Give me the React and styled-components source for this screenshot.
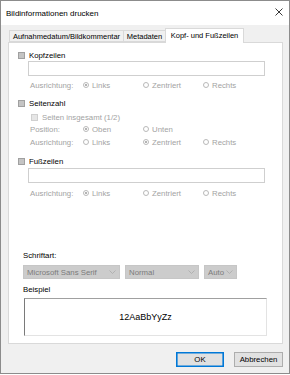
import React from "react";
import styled, { createGlobalStyle } from "styled-components";

const GlobalStyle = createGlobalStyle`
  html, body {
    margin: 0;
    padding: 0;
    background: #ffffff;
  }
  body {
    font-family: "Liberation Sans", Arial, sans-serif;
    font-size: 7.8px;
    color: #000;
  }
`;

const tabs = [
  { label: "Aufnahmedatum/Bildkommentar", width: 115 },
  { label: "Metadaten", width: 43 },
  { label: "Kopf- und Fußzeilen", width: 79, active: true },
];

const Radio = ({ checked, children }) => (
  <RadioItem>
    <RadioDot $checked={checked} />
    <span>{children}</span>
  </RadioItem>
);

const Check = ({ children, sub }) => (
  <CheckRow $sub={sub}>
    <CheckBox $sub={sub} />
    <span>{children}</span>
  </CheckRow>
);

const Chevron = () => (
  <svg width="7" height="4" viewBox="0 0 7 4">
    <polyline points="0.5,0.5 3.5,3.5 6.5,0.5" fill="none" stroke="#a9a9a9" strokeWidth="0.8" />
  </svg>
);

const App = () => (
  <>
    <GlobalStyle />
    <Window>
      <TitleBar>
        <Title>Bildinformationen drucken</Title>
        <svg width="8" height="8" viewBox="0 0 8 8">
          <path d="M0.5 0.5 L7.5 7.5 M7.5 0.5 L0.5 7.5" stroke="#222" strokeWidth="0.9" />
        </svg>
      </TitleBar>
      <Body>
        <TabStrip>
          {tabs.map((t) => (
            <Tab key={t.label} $active={t.active} $width={t.width}>
              {t.label}
            </Tab>
          ))}
        </TabStrip>
        <Panel>
          <Check>Kopfzeilen</Check>
          <TextBox $top={1} />
          <OptionRow $top={4}>
            <span>Ausrichtung:</span>
            <Radio checked>Links</Radio>
            <Radio>Zentriert</Radio>
            <Radio>Rechts</Radio>
          </OptionRow>

          <Section $top={8}>
            <Check>Seitenzahl</Check>
          </Section>
          <Section $top={4}>
            <Check sub>Seiten insgesamt (1/2)</Check>
          </Section>
          <OptionRow $top={2}>
            <span>Position:</span>
            <Radio checked>Oben</Radio>
            <Radio>Unten</Radio>
          </OptionRow>
          <OptionRow $top={3}>
            <span>Ausrichtung:</span>
            <Radio>Links</Radio>
            <Radio checked>Zentriert</Radio>
            <Radio>Rechts</Radio>
          </OptionRow>

          <Section $top={9}>
            <Check>Fußzeilen</Check>
          </Section>
          <TextBox $top={2} />
          <OptionRow $top={5}>
            <span>Ausrichtung:</span>
            <Radio checked>Links</Radio>
            <Radio>Zentriert</Radio>
            <Radio>Rechts</Radio>
          </OptionRow>

          <Label $top={53}>Schriftart:</Label>
          <SelectRow>
            <Select $width={97}>
              <span>Microsoft Sans Serif</span>
              <Chevron />
            </Select>
            <Select $width={74}>
              <span>Normal</span>
              <Chevron />
            </Select>
            <Select $width={33}>
              <span>Auto</span>
              <Chevron />
            </Select>
          </SelectRow>
          <Label $top={6}>Beispiel</Label>
          <Preview>12AaBbYyZz</Preview>
        </Panel>
        <Buttons>
          <Button $default>OK</Button>
          <Button>Abbrechen</Button>
        </Buttons>
      </Body>
    </Window>
  </>
);

const Window = styled.div`
  box-sizing: border-box;
  width: 290px;
  height: 374px;
  border: 1px solid #8c8c8c;
  display: flex;
  flex-direction: column;
  background: #f0f0f0;
`;

const TitleBar = styled.div`
  height: 24px;
  background: #ffffff;
  display: flex;
  align-items: center;
  justify-content: space-between;
  padding: 0 5px 0 5px;
  flex: none;
  svg {
    margin-right: 1px;
    margin-top: -2px;
  }
`;

const Title = styled.div`
  font-size: 8px;
  color: #000;
`;

const Body = styled.div`
  flex: 1;
  padding: 3px 6px 0 7px;
  display: flex;
  flex-direction: column;
`;

const TabStrip = styled.div`
  display: flex;
  align-items: flex-end;
  height: 14px;
  padding-left: 2px;
  position: relative;
  z-index: 1;
`;

const Tab = styled.div`
  box-sizing: border-box;
  width: ${(p) => p.$width}px;
  height: ${(p) => (p.$active ? 15 : 12)}px;
  margin-bottom: ${(p) => (p.$active ? -1 : 0)}px;
  margin-left: -1px;
  display: flex;
  align-items: center;
  justify-content: center;
  padding-bottom: ${(p) => (p.$active ? 2 : 0)}px;
  border: 1px solid #d9d9d9;
  border-bottom: ${(p) => (p.$active ? "none" : "1px solid #d9d9d9")};
  background: ${(p) => (p.$active ? "#ffffff" : "#f0f0f0")};
  font-size: 7.5px;
  white-space: nowrap;
`;

const Panel = styled.div`
  box-sizing: border-box;
  height: 302px;
  width: 275px;
  border: 1px solid #d9d9d9;
  background: #ffffff;
  padding: 7px 0 0 9px;
  display: flex;
  flex-direction: column;
`;

const Section = styled.div`
  margin-top: ${(p) => p.$top || 0}px;
`;

const CheckRow = styled.div`
  height: 10px;
  display: flex;
  align-items: center;
  gap: 4px;
  margin-left: ${(p) => (p.$sub ? 13 : 0)}px;
  color: ${(p) => (p.$sub ? "#a3a3a3" : "#000")};
`;

const CheckBox = styled.span`
  box-sizing: border-box;
  width: 7px;
  height: 7px;
  border: 1px solid ${(p) => (p.$sub ? "#d0d0d0" : "#a0a0a0")};
  background: ${(p) => (p.$sub ? "#e6e6e6" : "#c4c4c4")};
`;

const TextBox = styled.div`
  box-sizing: border-box;
  margin: ${(p) => p.$top}px 0 0 10px;
  width: 237px;
  height: 15px;
  border: 1px solid #cfcfcf;
  background: #fff;
`;

const OptionRow = styled.div`
  margin: ${(p) => p.$top}px 0 0 12px;
  height: 10px;
  display: grid;
  grid-template-columns: 53px 60px 60px auto;
  align-items: center;
  color: #a3a3a3;
`;

const RadioItem = styled.div`
  display: flex;
  align-items: center;
  gap: 3px;
`;

const RadioDot = styled.span`
  box-sizing: border-box;
  width: 6px;
  height: 6px;
  border-radius: 50%;
  border: 1px solid #b9b9b9;
  background: #fff;
  display: flex;
  align-items: center;
  justify-content: center;
  &::after {
    content: "";
    width: 2.5px;
    height: 2.5px;
    border-radius: 50%;
    background: ${(p) => (p.$checked ? "#9a9a9a" : "transparent")};
  }
`;

const Label = styled.div`
  margin: ${(p) => p.$top}px 0 0 5px;
  height: 10px;
  line-height: 10px;
`;

const SelectRow = styled.div`
  margin: 4px 0 0 5px;
  display: flex;
  gap: 5px;
`;

const Select = styled.div`
  box-sizing: border-box;
  width: ${(p) => p.$width}px;
  height: 14px;
  background: #cccccc;
  border: 1px solid #c6c6c6;
  color: #7b7b7b;
  display: flex;
  align-items: center;
  justify-content: space-between;
  gap: 2px;
  padding: 0 3px 0 3px;
  white-space: nowrap;
`;

const Preview = styled.div`
  box-sizing: border-box;
  margin: 3px 0 0 6px;
  width: 243px;
  height: 38px;
  border-top: 1px solid #a0a0a0;
  border-left: 1px solid #7a7a7a;
  border-right: 1px solid #e3e3e3;
  border-bottom: 1px solid #e3e3e3;
  background: #fff;
  display: flex;
  align-items: center;
  justify-content: center;
  font-size: 9px;
  color: #000;
`;

const Buttons = styled.div`
  display: flex;
  justify-content: flex-end;
  gap: 10px;
  margin-top: 8px;
`;

const Button = styled.div`
  box-sizing: border-box;
  width: ${(p) => (p.$default ? 48 : 49)}px;
  height: 15px;
  background: #e1e1e1;
  border: 1px solid ${(p) => (p.$default ? "#0078d7" : "#adadad")};
  box-shadow: ${(p) => (p.$default ? "inset 0 0 0 0.6px #0078d7" : "none")};
  display: flex;
  align-items: center;
  justify-content: center;
`;

export default App;
